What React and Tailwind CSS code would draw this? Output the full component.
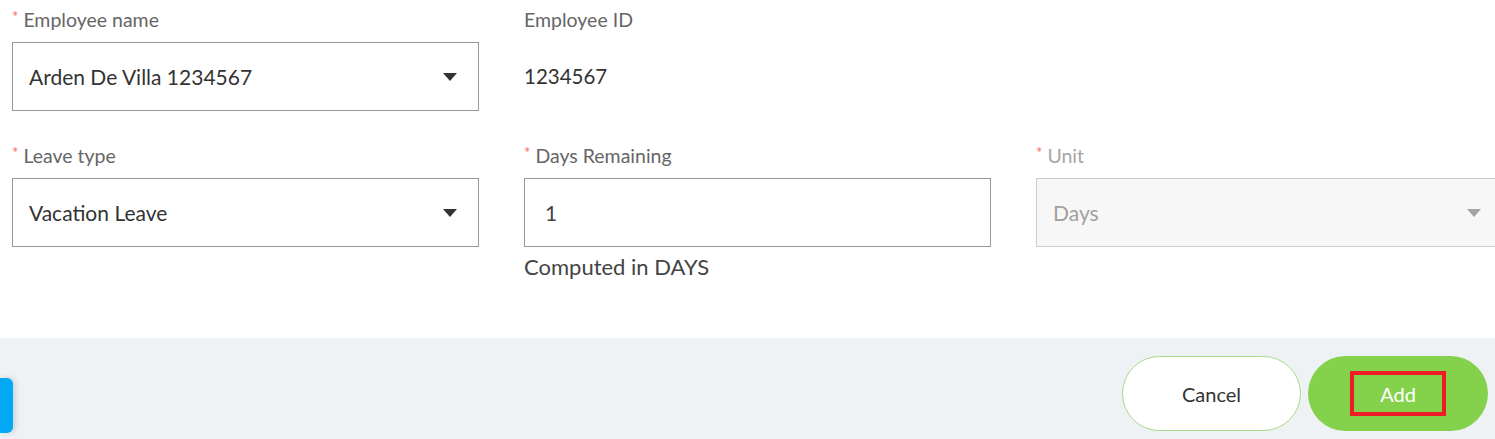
function Caret({ muted }) {
  return (
    <svg width="14" height="8" viewBox="0 0 14 8" className="shrink-0">
      <path d="M0 0 H14 L7 8 Z" fill={muted ? "#a3a3a3" : "#333333"} />
    </svg>
  );
}

function Label({ children, required, muted }) {
  return (
    <div className={`h-[42px] flex items-start pt-[7px] text-[19.5px] leading-[26px] ${muted ? "text-[#a6a6a6]" : "text-[#666666]"}`}>
      {required && <span className="text-[#f26d6d] text-[15px] mr-[5px] leading-[18px]">*</span>}
      {children}
    </div>
  );
}

function SelectBox({ value, muted }) {
  return (
    <div
      className={`h-[69px] flex items-center justify-between pl-[16px] pr-[21px] border ${
        muted ? "bg-[#f7f7f7] border-[#cccccc] text-[#a0a0a0]" : "bg-white border-[#999999] text-[#333333]"
      } text-[21px]`}
    >
      <span>{value}</span>
      <Caret muted={muted} />
    </div>
  );
}

export default function App() {
  return (
    <div className="w-[1495px] h-[439px] overflow-hidden bg-white font-['Lato',sans-serif]">
      <div className="h-[338px] px-[12px] flex gap-[45px] w-[1560px]">
        <div className="w-[467px] shrink-0">
          <Label required>Employee name</Label>
          <SelectBox value="Arden De Villa 1234567" />
          <div className="h-[25px]" />
          <Label required>Leave type</Label>
          <SelectBox value="Vacation Leave" />
        </div>
        <div className="w-[467px] shrink-0">
          <Label>Employee ID</Label>
          <div className="h-[69px] flex items-center text-[20.5px] text-[#333333]">1234567</div>
          <div className="h-[25px]" />
          <Label required>Days Remaining</Label>
          <div className="h-[69px] flex items-center pl-[20px] border border-[#999999] text-[21px] text-[#444444]">1</div>
          <div className="pt-[5px] text-[22px] leading-[30px] text-[#444444]">Computed in DAYS</div>
        </div>
        <div className="w-[467px] shrink-0">
          <div className="h-[69px]" />
          <div className="h-[42px]" />
          <div className="h-[25px]" />
          <Label required muted>Unit</Label>
          <SelectBox value="Days" muted />
        </div>
      </div>
      <div className="h-[101px] bg-[#eef2f5] flex items-start justify-between pr-[7px]">
        <div className="mt-[40px] w-[13px] h-[55px] bg-[#03a9f4] rounded-r-[6px] shadow-[2px_0_6px_rgba(0,0,0,0.15)]" />
        <div className="flex gap-[7px] mt-[18px]">
          <button className="w-[179px] h-[75px] rounded-full bg-white border border-[#a9d98a] text-[#333333] text-[20px]">Cancel</button>
          <button className="w-[180px] h-[75px] rounded-full bg-[#84d14c] text-white text-[20px] flex items-center justify-center">
            <span className="w-[96px] h-[45px] border-[4px] border-[#ee1c25] flex items-center justify-center">Add</span>
          </button>
        </div>
      </div>
    </div>
  );
}
